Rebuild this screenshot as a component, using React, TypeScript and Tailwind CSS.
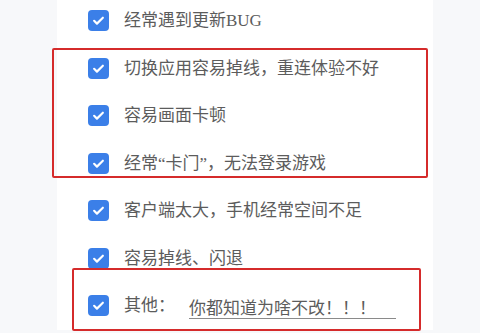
const options = [
  "经常遇到更新BUG",
  "切换应用容易掉线，重连体验不好",
  "容易画面卡顿",
  "经常“卡门”，无法登录游戏",
  "客户端太大，手机经常空间不足",
  "容易掉线、闪退",
];

const CheckBox = () => (
  <span className="flex h-[21px] w-[21px] shrink-0 items-center justify-center rounded-[4px] bg-[#3b7fe8]">
    <svg viewBox="0 0 24 24" className="h-[15px] w-[15px]" fill="none" stroke="white" strokeWidth={3.4} strokeLinecap="round" strokeLinejoin="round">
      <path d="M5 12.5l4.5 4.5L19 7.5" />
    </svg>
  </span>
);

const Row = ({ children }: { children: React.ReactNode }) => (
  <div className="flex h-[47.5px] items-center gap-[15px] pl-[31px]">
    <CheckBox />
    {children}
  </div>
);

export default function App() {
  return (
    <div
      className="relative h-[333px] w-[480px] overflow-hidden bg-[#f7f8fa] text-[17px] text-[#5c5c5c]"
      style={{ fontFamily: '"Liberation Serif", "Noto Sans CJK SC", sans-serif' }}
    >
      <div className="ml-[57px] h-full w-[376px] bg-white">
        <div className="-mt-[3px]">
          {options.map((o) => (
            <Row key={o}>
              <span className="whitespace-nowrap">{o}</span>
            </Row>
          ))}
          <Row>
            <span className="whitespace-nowrap">其他：</span>
            <div className="ml-[-1px] flex h-[26px] w-[207px] items-end border-b border-[#8a8a8a] pb-[1px]">
              <span className="whitespace-nowrap leading-none">你都知道为啥不改！！！</span>
            </div>
          </Row>
        </div>
      </div>

      {/* red annotation frames */}
      <div className="absolute left-[52px] top-[48px] h-[130px] w-[376px] rounded-[2px] border-2 border-[#d52b2b]" />
      <div className="absolute left-[72px] top-[268px] h-[63px] w-[349px] rounded-[2px] border-2 border-[#d52b2b]" />
    </div>
  );
}
